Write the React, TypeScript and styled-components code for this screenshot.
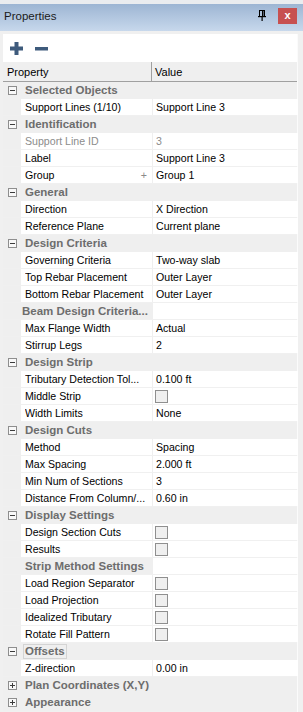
import React from 'react';
import styled, { createGlobalStyle } from 'styled-components';

const GlobalStyle = createGlobalStyle`
  html, body {
    margin: 0;
    padding: 0;
    background: #f0f0f0;
  }
  body {
    font-family: "Liberation Sans", Arial, sans-serif;
    font-size: 11px;
    color: #000;
  }
`;

export const Window = styled.div`
  width: 303px;
  height: 712px;
  display: flex;
  flex-direction: column;
  background: #f0f0f0;
  border-top: 4px solid #eaecef;
  box-sizing: border-box;
  overflow: hidden;
`;

export const TitleBar = styled.div`
  height: 27px;
  flex: none;
  display: flex;
  align-items: center;
  padding: 0 6px 0 4px;
  background: linear-gradient(#9db5d3, #c7d8ec);
`;

export const Title = styled.span`
  flex: 1;
  font-size: 11.5px;
  color: #1b1b1b;
  padding-bottom: 3px;
`;

export const PinButton = styled.span`
  width: 10px;
  height: 12px;
  margin-right: 11px;
  margin-bottom: 4px;
  display: flex;
  align-items: center;
  justify-content: center;
`;

export const CloseButton = styled.span`
  width: 19px;
  height: 16px;
  margin-bottom: 3px;
  background: #c75050;
  color: #fff;
  font-weight: bold;
  font-size: 11px;
  line-height: 15px;
  text-align: center;
`;

export const Panel = styled.div`
  flex: 1;
  display: flex;
  flex-direction: column;
  margin: 3px 5px 0 3px;
  border-right: 1px solid #fbfbfb;
`;

export const Toolbar = styled.div`
  height: 28px;
  flex: none;
  display: flex;
  align-items: center;
  gap: 12px;
  padding-left: 7px;
  background: #fff;
`;

export const HeaderRow = styled.div`
  height: 19px;
  flex: none;
  display: grid;
  grid-template-columns: 148px 1fr;
  background: #efefef;
  border-bottom: 1px solid #a0a0a0;
`;

export const HeaderCell = styled.div<{ $divider?: boolean }>`
  display: flex;
  align-items: center;
  padding-left: ${(p) => (p.$divider ? '3px' : '4px')};
  border-left: ${(p) => (p.$divider ? '1px solid #a0a0a0' : 'none')};
  font-size: 11px;
`;

export const GroupRow = styled.div`
  height: 17px;
  display: flex;
  align-items: center;
  background: #efefef;
`;

export const ToggleBox = styled.span`
  width: 7px;
  height: 7px;
  margin: 0 8px 0 5px;
  border: 1px solid #8e8e8e;
  background: #f8f8f8;
  position: relative;
  flex: none;

  &::before {
    content: '';
    position: absolute;
    left: 1px;
    top: 3px;
    width: 5px;
    height: 1px;
    background: #3c3c3c;
  }
`;

export const ToggleBoxPlus = styled(ToggleBox)`
  &::after {
    content: '';
    position: absolute;
    left: 3px;
    top: 1px;
    width: 1px;
    height: 5px;
    background: #3c3c3c;
  }
`;

export const GroupLabel = styled.span<{ $focused?: boolean }>`
  font-weight: bold;
  font-size: 11.5px;
  color: #6d6d6d;
  padding: 0 1px;
  line-height: 13px;
  border: 1px solid ${(p) => (p.$focused ? '#d4d4d4' : 'transparent')};
  margin-left: -2px;
`;

export const PropRow = styled.div`
  height: 16px;
  margin-bottom: 1px;
  display: grid;
  grid-template-columns: 17px 131px 145px;
  column-gap: 1px;
  background: #efefef;
`;

export const Cell = styled.div<{ $muted?: boolean; $sub?: boolean; $indent?: number }>`
  display: flex;
  align-items: center;
  padding-left: ${(p) => (p.$indent ?? 4)}px;
  padding-right: 2px;
  background: ${(p) => (p.$sub ? '#efefef' : '#fff')};
  color: ${(p) => (p.$sub ? '#6d6d6d' : p.$muted ? '#8c8c8c' : '#000')};
  font-weight: ${(p) => (p.$sub ? 'bold' : 'normal')};
  font-size: ${(p) => (p.$sub ? '11.5px' : '10.6px')};
  white-space: nowrap;
  overflow: hidden;
`;

export const LabelText = styled.span`
  flex: 1;
  overflow: hidden;
`;

export const AddMark = styled.span`
  color: #8a8a8a;
  margin-right: 3px;
`;

export const Checkbox = styled.span`
  width: 11px;
  height: 11px;
  margin-left: -1px;
  border: 1px solid #8f8f8f;
  background: #efefef;
`;

type Row =
  | { kind: 'group'; label: string; collapsed?: boolean; focused?: boolean }
  | { kind: 'sub'; label: string; indent: number }
  | { kind: 'prop'; label: string; value?: string; check?: boolean; muted?: boolean; add?: boolean };

const rows: Row[] = [
  { kind: 'group', label: 'Selected Objects' },
  { kind: 'prop', label: 'Support Lines (1/10)', value: 'Support Line 3' },
  { kind: 'group', label: 'Identification' },
  { kind: 'prop', label: 'Support Line ID', value: '3', muted: true },
  { kind: 'prop', label: 'Label', value: 'Support Line 3' },
  { kind: 'prop', label: 'Group', value: 'Group 1', add: true },
  { kind: 'group', label: 'General' },
  { kind: 'prop', label: 'Direction', value: 'X Direction' },
  { kind: 'prop', label: 'Reference Plane', value: 'Current plane' },
  { kind: 'group', label: 'Design Criteria' },
  { kind: 'prop', label: 'Governing Criteria', value: 'Two-way slab' },
  { kind: 'prop', label: 'Top Rebar Placement', value: 'Outer Layer' },
  { kind: 'prop', label: 'Bottom Rebar Placement', value: 'Outer Layer' },
  { kind: 'sub', label: 'Beam Design Criteria...', indent: 1 },
  { kind: 'prop', label: 'Max Flange Width', value: 'Actual' },
  { kind: 'prop', label: 'Stirrup Legs', value: '2' },
  { kind: 'group', label: 'Design Strip' },
  { kind: 'prop', label: 'Tributary Detection Tol...', value: '0.100 ft' },
  { kind: 'prop', label: 'Middle Strip', check: true },
  { kind: 'prop', label: 'Width Limits', value: 'None' },
  { kind: 'group', label: 'Design Cuts' },
  { kind: 'prop', label: 'Method', value: 'Spacing' },
  { kind: 'prop', label: 'Max Spacing', value: '2.000 ft' },
  { kind: 'prop', label: 'Min Num of Sections', value: '3' },
  { kind: 'prop', label: 'Distance From Column/...', value: '0.60 in' },
  { kind: 'group', label: 'Display Settings' },
  { kind: 'prop', label: 'Design Section Cuts', check: true },
  { kind: 'prop', label: 'Results', check: true },
  { kind: 'sub', label: 'Strip Method Settings', indent: 4 },
  { kind: 'prop', label: 'Load Region Separator', check: true },
  { kind: 'prop', label: 'Load Projection', check: true },
  { kind: 'prop', label: 'Idealized Tributary', check: true },
  { kind: 'prop', label: 'Rotate Fill Pattern', check: true },
  { kind: 'group', label: 'Offsets', focused: true },
  { kind: 'prop', label: 'Z-direction', value: '0.00 in' },
  { kind: 'group', label: 'Plan Coordinates (X,Y)', collapsed: true },
  { kind: 'group', label: 'Appearance', collapsed: true },
];

function PinIcon() {
  return (
    <svg width="8" height="11" viewBox="0 0 8 11">
      <rect x="1.5" y="0.5" width="5" height="6" fill="none" stroke="#000" />
      <rect x="4" y="1" width="1.5" height="5.5" fill="#000" />
      <rect x="0" y="6" width="8" height="1.2" fill="#000" />
      <rect x="3.5" y="7" width="1.2" height="4" fill="#000" />
    </svg>
  );
}

function PlusIcon() {
  return (
    <svg width="13" height="13" viewBox="0 0 13 13">
      <rect x="4.5" y="0" width="4" height="13" fill="#3e5b7c" />
      <rect x="0" y="4.5" width="13" height="4" fill="#3e5b7c" />
    </svg>
  );
}

function MinusIcon() {
  return (
    <svg width="13" height="13" viewBox="0 0 13 13">
      <rect x="0" y="5" width="13" height="3.5" fill="#3e5b7c" />
    </svg>
  );
}

function renderRow(row: Row, i: number) {
  if (row.kind === 'group') {
    return (
      <GroupRow key={i}>
        {row.collapsed ? <ToggleBoxPlus /> : <ToggleBox />}
        <GroupLabel $focused={row.focused}>{row.label}</GroupLabel>
      </GroupRow>
    );
  }
  if (row.kind === 'sub') {
    return (
      <PropRow key={i}>
        <span />
        <Cell $sub $indent={row.indent}>{row.label}</Cell>
        <Cell />
      </PropRow>
    );
  }
  return (
    <PropRow key={i}>
      <span />
      <Cell $muted={row.muted}>
        <LabelText>{row.label}</LabelText>
        {row.add && <AddMark>+</AddMark>}
      </Cell>
      <Cell $muted={row.muted} $indent={3}>
        {row.check ? <Checkbox /> : row.value}
      </Cell>
    </PropRow>
  );
}

export default function App() {
  return (
    <>
      <GlobalStyle />
      <Window>
        <TitleBar>
          <Title>Properties</Title>
          <PinButton>
            <PinIcon />
          </PinButton>
          <CloseButton>x</CloseButton>
        </TitleBar>
        <Panel>
          <Toolbar>
            <PlusIcon />
            <MinusIcon />
          </Toolbar>
          <HeaderRow>
            <HeaderCell>Property</HeaderCell>
            <HeaderCell $divider>Value</HeaderCell>
          </HeaderRow>
          {rows.map(renderRow)}
        </Panel>
      </Window>
    </>
  );
}
